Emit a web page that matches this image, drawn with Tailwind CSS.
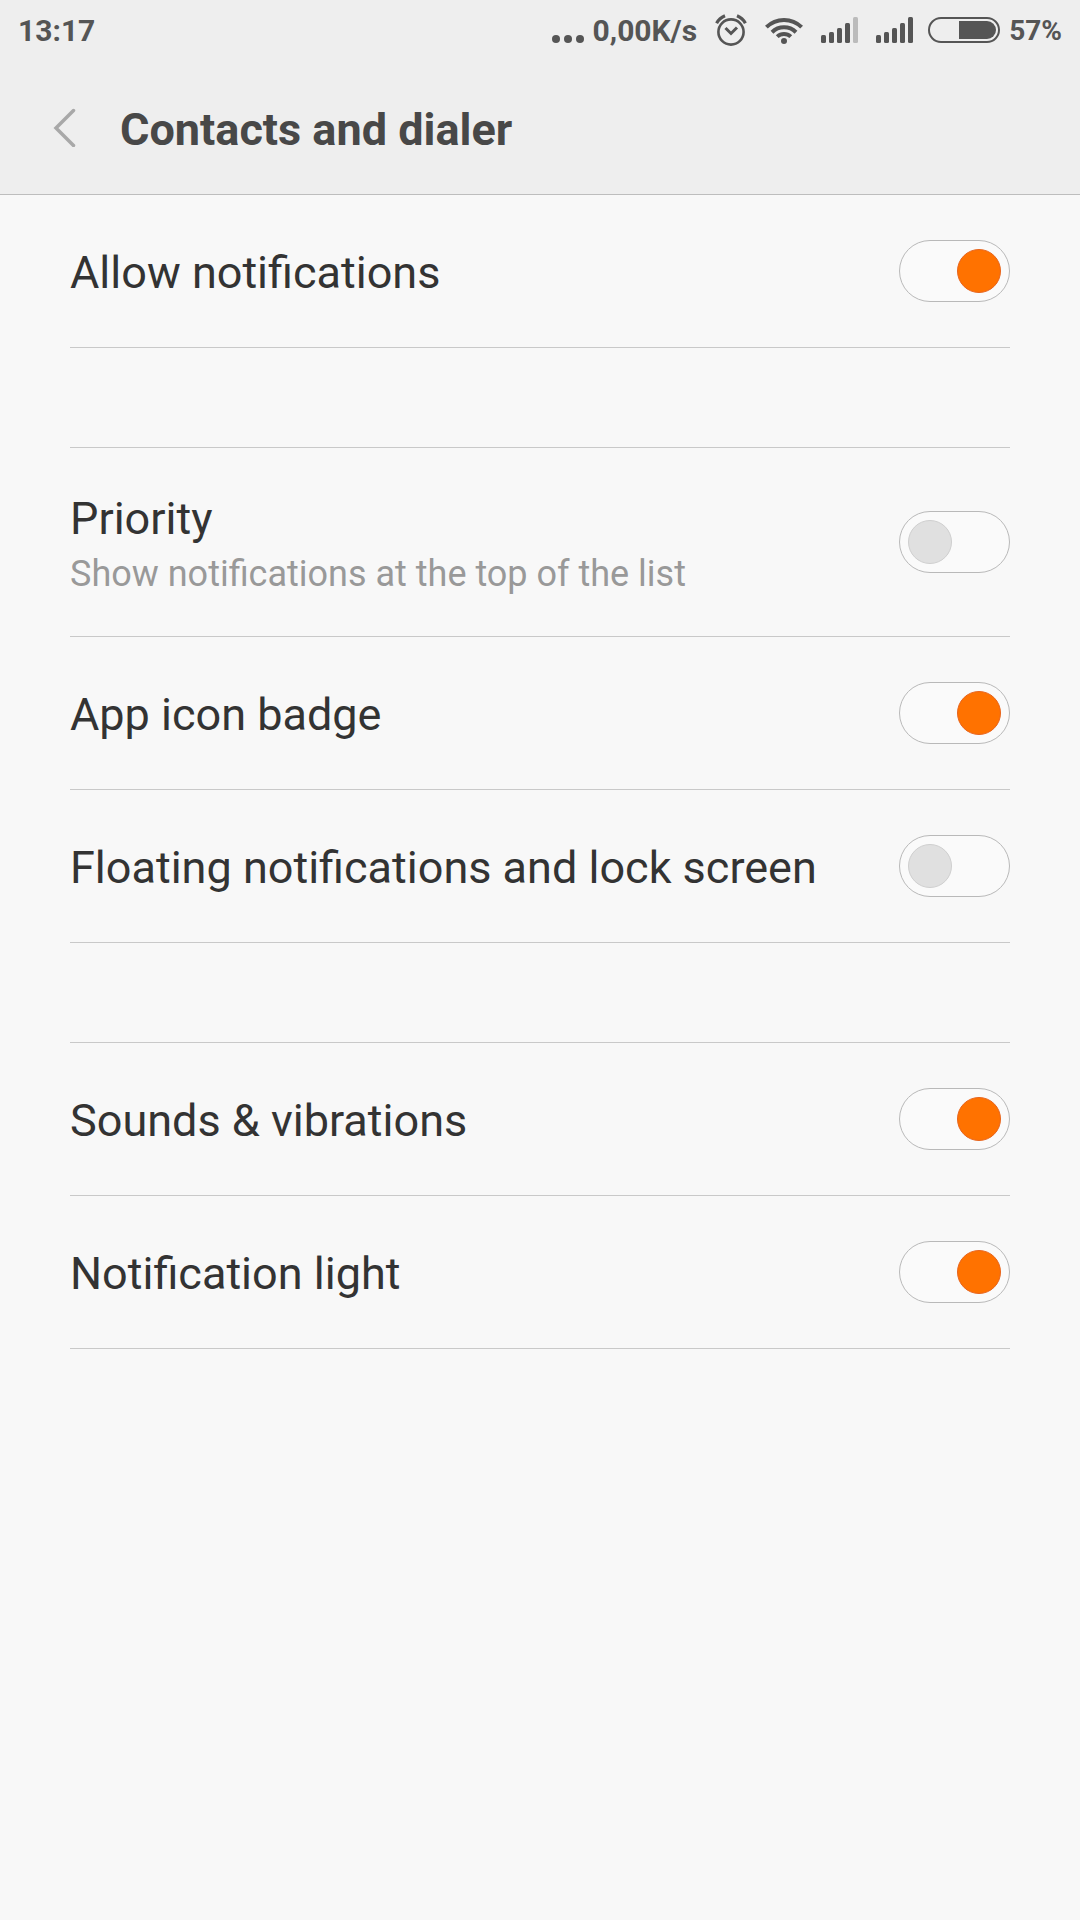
<!DOCTYPE html>
<html lang="en">
  <head>
    <meta charset="UTF-8" />
    <meta name="viewport" content="width=device-width, initial-scale=1.0" />
    <title>Contacts and dialer</title>
    <script src="https://cdn.jsdelivr.net/npm/@tailwindcss/browser@4"></script>
  </head>
  <body class="min-h-screen bg-[#f8f8f8] font-[Roboto,sans-serif] text-[#333333]">
    <header class="border-b border-[#bdbdbd] bg-[#eeeeee]">
      <!-- Status bar -->
      <div class="flex h-[60px] items-center justify-between px-[18px] text-[30px] font-bold text-[#555555]">
        <span>13:17</span>
        <div class="flex items-center">
          <svg class="mr-[9px] h-[32px] w-[32px]" viewBox="0 0 32 32" fill="currentColor">
            <circle cx="4" cy="25" r="4" />
            <circle cx="16" cy="25" r="4" />
            <circle cx="28" cy="25" r="4" />
          </svg>
          <span>0,00K/s</span>
          <!-- Alarm -->
          <svg class="ml-[18px] h-[32px] w-[32px]" viewBox="0 0 32 32" fill="none" stroke="currentColor" stroke-width="2.6">
            <circle cx="16" cy="18" r="12.6" />
            <path d="M10.5 14l5.500 5.500 6-6" stroke-width="3" />
            <path d="M1.6 9.2Q4.4 4 10 1.7M30.4 9.2Q27.6 4 22 1.7" stroke-width="3.2" />
          </svg>
          <!-- Wi-Fi -->
          <svg class="ml-[18px] h-[28px] w-[38px]" viewBox="0 0 38 28" fill="none" stroke="currentColor" stroke-width="4">
            <path d="M1.4 11.2a25 25 0 0 1 35.2 0" />
            <path d="M7 16.2a17.2 17.2 0 0 1 24 0" />
            <path d="M12.2 20.6a10 10 0 0 1 13.6 0" />
            <circle cx="19" cy="25" r="3" fill="currentColor" stroke="none" />
          </svg>
          <!-- Signal, SIM 1 -->
          <svg class="ml-[18px] h-[26px] w-[37px]" viewBox="0 0 37 26" fill="currentColor">
            <rect x="0" y="18" width="5" height="8" rx="1.5" />
            <rect x="8" y="15" width="5" height="11" rx="1.5" />
            <rect x="16" y="11" width="5" height="15" rx="1.5" />
            <rect x="24" y="6" width="5" height="20" rx="1.5" />
            <rect x="32" y="0" width="5" height="26" rx="1.5" fill="#bbbbbb" />
          </svg>
          <!-- Signal, SIM 2 -->
          <svg class="ml-[18px] h-[26px] w-[37px]" viewBox="0 0 37 26" fill="currentColor">
            <rect x="0" y="18" width="5" height="8" rx="1.5" />
            <rect x="8" y="15" width="5" height="11" rx="1.5" />
            <rect x="16" y="11" width="5" height="15" rx="1.5" />
            <rect x="24" y="6" width="5" height="20" rx="1.5" />
            <rect x="32" y="0" width="5" height="26" rx="1.5" />
          </svg>
          <!-- Battery -->
          <svg class="ml-[15px] h-[26px] w-[72px]" viewBox="0 0 72 26" fill="none">
            <rect x="1" y="1" width="70" height="24" rx="12" stroke="currentColor" stroke-width="2" />
            <path d="M31 4h28a9 9 0 0 1 0 18H31z" fill="currentColor" />
          </svg>
          <span class="ml-[9px] pt-[2px] text-[28px]">57%</span>
        </div>
      </div>
      <!-- Title bar -->
      <div class="flex h-[134px] items-center pl-[53px]">
        <a href="#" aria-label="Back" class="block">
          <svg class="h-[40px] w-[23px]" viewBox="0 0 23 40" fill="none" stroke="#a8a8a8" stroke-width="3.5" stroke-linecap="round" stroke-linejoin="miter">
            <path d="M20.5 3.500L3 21l17.500 17.500" />
          </svg>
        </a>
        <h1 class="ml-[44px] pt-[6px] text-[45px] font-bold text-[#484848]">Contacts and dialer</h1>
      </div>
    </header>

    <main class="px-[70px]">
      <section>
        <label class="flex h-[153px] items-center justify-between border-b border-[#c9c9c9]">
          <span class="pt-1 text-[45px] leading-[60px]">Allow notifications</span>
          <input type="checkbox" checked class="h-[62px] w-[111px] shrink-0 appearance-none rounded-full border border-[#b9b9b9] bg-[#fafafa] p-2 before:block before:size-[44px] before:rounded-full before:border before:border-[#cfcfcf] before:bg-[#e0e0e0] checked:before:ml-auto checked:before:border-[#e8641c] checked:before:bg-[#ff7200]" />
        </label>
      </section>

      <section class="mt-[99px] border-t border-[#c9c9c9]">
        <label class="flex h-[189px] items-center justify-between border-b border-[#c9c9c9]">
          <span class="pt-1">
            <span class="block text-[45px] leading-[60px]">Priority</span>
            <span class="block text-[36px] leading-[50px] text-[#999999]">Show notifications at the top of the list</span>
          </span>
          <input type="checkbox" class="h-[62px] w-[111px] shrink-0 appearance-none rounded-full border border-[#b9b9b9] bg-[#fafafa] p-2 before:block before:size-[44px] before:rounded-full before:border before:border-[#cfcfcf] before:bg-[#e0e0e0] checked:before:ml-auto checked:before:border-[#e8641c] checked:before:bg-[#ff7200]" />
        </label>
        <label class="flex h-[153px] items-center justify-between border-b border-[#c9c9c9]">
          <span class="pt-1 text-[45px] leading-[60px]">App icon badge</span>
          <input type="checkbox" checked class="h-[62px] w-[111px] shrink-0 appearance-none rounded-full border border-[#b9b9b9] bg-[#fafafa] p-2 before:block before:size-[44px] before:rounded-full before:border before:border-[#cfcfcf] before:bg-[#e0e0e0] checked:before:ml-auto checked:before:border-[#e8641c] checked:before:bg-[#ff7200]" />
        </label>
        <label class="flex h-[153px] items-center justify-between border-b border-[#c9c9c9]">
          <span class="pt-1 text-[45px] leading-[60px]">Floating notifications and lock screen</span>
          <input type="checkbox" class="h-[62px] w-[111px] shrink-0 appearance-none rounded-full border border-[#b9b9b9] bg-[#fafafa] p-2 before:block before:size-[44px] before:rounded-full before:border before:border-[#cfcfcf] before:bg-[#e0e0e0] checked:before:ml-auto checked:before:border-[#e8641c] checked:before:bg-[#ff7200]" />
        </label>
      </section>

      <section class="mt-[99px] border-t border-[#c9c9c9]">
        <label class="flex h-[153px] items-center justify-between border-b border-[#c9c9c9]">
          <span class="pt-1 text-[45px] leading-[60px]">Sounds &amp; vibrations</span>
          <input type="checkbox" checked class="h-[62px] w-[111px] shrink-0 appearance-none rounded-full border border-[#b9b9b9] bg-[#fafafa] p-2 before:block before:size-[44px] before:rounded-full before:border before:border-[#cfcfcf] before:bg-[#e0e0e0] checked:before:ml-auto checked:before:border-[#e8641c] checked:before:bg-[#ff7200]" />
        </label>
        <label class="flex h-[153px] items-center justify-between border-b border-[#c9c9c9]">
          <span class="pt-1 text-[45px] leading-[60px]">Notification light</span>
          <input type="checkbox" checked class="h-[62px] w-[111px] shrink-0 appearance-none rounded-full border border-[#b9b9b9] bg-[#fafafa] p-2 before:block before:size-[44px] before:rounded-full before:border before:border-[#cfcfcf] before:bg-[#e0e0e0] checked:before:ml-auto checked:before:border-[#e8641c] checked:before:bg-[#ff7200]" />
        </label>
      </section>
    </main>
  </body>
</html>
